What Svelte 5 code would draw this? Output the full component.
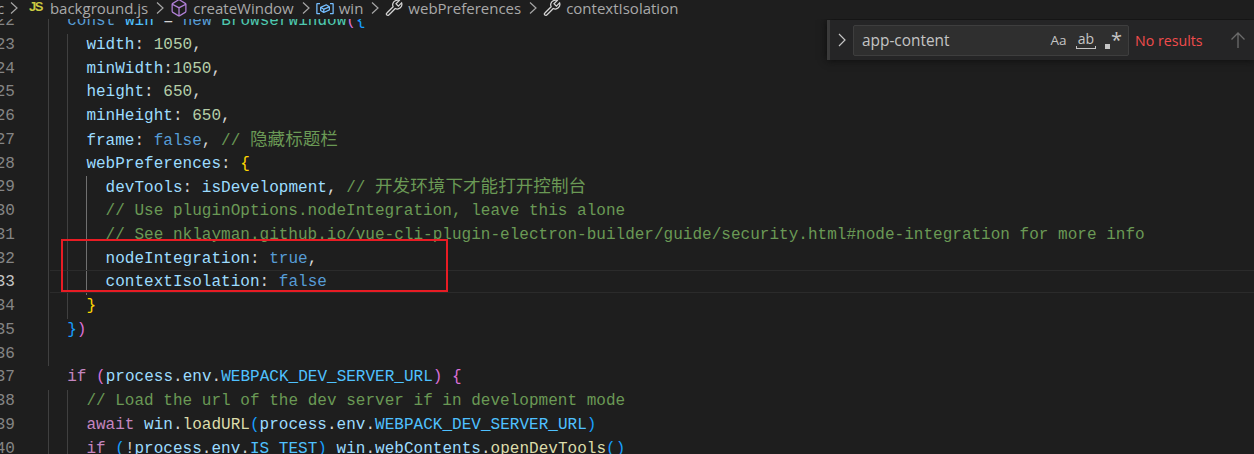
<script>
  const c = (t) => ['cm', t];
  const p = (t) => ['pr', t];
  const k = (t) => ['kw', t];
  const n = (t) => ['nu', t];
  const s = (t) => ['sy', t];
  const v = (t) => ['pr', t];
  const o = (t) => ['ct', t];
  const f = (t) => ['fn', t];
  const u = (t) => ['cn', t];
  const h = (t) => ['cjk', t];

  // guides: how many indent columns are drawn, the "active" one is brighter
  const lines = [
    { no: 22, g: 1, t: [k('const'), s(' '), u('win'), s(' = '), k('new'), s(' '), ['cl', 'BrowserWindow'], ['b2', '('], ['b3', '{']] },
    { no: 23, g: 2, t: [p('width'), s(': '), n('1050'), s(',')] },
    { no: 24, g: 2, t: [p('minWidth'), s(':'), n('1050'), s(',')] },
    { no: 25, g: 2, t: [p('height'), s(': '), n('650'), s(',')] },
    { no: 26, g: 2, t: [p('minHeight'), s(': '), n('650'), s(',')] },
    { no: 27, g: 2, t: [p('frame'), s(': '), k('false'), s(', '), c('// '), h('隐藏标题栏')] },
    { no: 28, g: 2, t: [p('webPreferences'), s(': '), ['b1', '{']] },
    { no: 29, g: 3, t: [p('devTools'), s(': '), v('isDevelopment'), s(', '), c('// '), h('开发环境下才能打开控制台')] },
    { no: 30, g: 3, t: [c('// Use pluginOptions.nodeIntegration, leave this alone')] },
    { no: 31, g: 3, t: [c('// See nklayman.github.io/vue-cli-plugin-electron-builder/guide/security.html#node-integration for more info')] },
    { no: 32, g: 3, t: [p('nodeIntegration'), s(': '), k('true'), s(',')] },
    { no: 33, g: 3, cur: true, t: [p('contextIsolation'), s(': '), k('false')] },
    { no: 34, g: 2, t: [['b1', '}']] },
    { no: 35, g: 1, t: [['b3', '}'], ['b2', ')']] },
    { no: 36, g: 1, t: [] },
    { no: 37, g: 1, skip: 1, t: [o('if'), s(' '), ['b2', '('], v('process'), s('.'), v('env'), s('.'), u('WEBPACK_DEV_SERVER_URL'), ['b2', ')'], s(' '), ['b2', '{']] },
    { no: 38, g: 2, t: [c('// Load the url of the dev server if in development mode')] },
    { no: 39, g: 2, t: [o('await'), s(' '), v('win'), s('.'), f('loadURL'), ['b3', '('], v('process'), s('.'), v('env'), s('.'), u('WEBPACK_DEV_SERVER_URL'), ['b3', ')']] },
    { no: 40, g: 2, t: [o('if'), s(' '), ['b3', '('], s('!'), v('process'), s('.'), v('env'), s('.'), u('IS_TEST'), ['b3', ')'], s(' '), v('win'), s('.'), v('webContents'), s('.'), f('openDevTools'), ['b3', '()']] }
  ];

  const crumbs = [
    { label: 'background.js', icon: 'js' },
    { label: 'createWindow', icon: 'method' },
    { label: 'win', icon: 'variable' },
    { label: 'webPreferences', icon: 'prop' },
    { label: 'contextIsolation', icon: 'prop' }
  ];
</script>

{#snippet chevron()}
  <svg class="chev" width="8" height="14" viewBox="0 0 8 14" fill="none" stroke="#a6a6a6" stroke-width="1.2">
    <path d="M1 1.5 7 7 1 12.5" />
  </svg>
{/snippet}

<div class="window">
  <nav class="crumbs">
    <span class="first">c</span>
    {#each crumbs as crumb}
      {@render chevron()}
      {#if crumb.icon === 'js'}
        <span class="js">JS</span>
      {:else if crumb.icon === 'method'}
        <svg width="20" height="20" viewBox="0 0 16 16" fill="#b180d7"><path d="M13.51 4l-5-3h-1l-5 3-.49.86v6l.49.85 5 3h1l5-3 .49-.85v-6L13.51 4zm-6 9.56l-4.5-2.7V5.7l4.5 2.45v5.41zM3.27 4.7l4.74-2.84 4.74 2.84-4.74 2.59L3.27 4.7zm9.74 6.16l-4.5 2.7V8.15l4.5-2.45v5.16z" /></svg>
      {:else if crumb.icon === 'variable'}
        <svg width="20" height="20" viewBox="0 0 16 16" fill="#75beff"><path d="M2 5h2V4H1.5l-.5.5v8l.5.5H4v-1H2V5zm12.5-1H12v1h2v7h-2v1h2.5l.5-.5v-8l-.5-.5zm-2.74 2.57L12 7v2.51l-.3.45-4.5 2-.46-.04-2.5-1.5-.24-.43v-2.5l.3-.46 4.5-2h.46l2.5 1.5zM5 9.71l1.5.9V9.28L5 8.38v1.33zm.58-2.15l1.45.87 3.39-1.5-1.45-.87-3.39 1.5zm1.95 3.17l3.5-1.56v-1.4l-3.5 1.55v1.41z" /></svg>
      {:else}
        <svg width="20" height="20" viewBox="0 0 16 16" fill="none" stroke="#d4d4d4" stroke-width="1"><path d="M1.9 12.5c1.3-1.4 3.7-3.8 5.4-5.5a3.6 3.6 0 0 1 1.9-4.9 3.7 3.7 0 0 1 3-.1l-2.6 2.6 1.9 1.9 2.6-2.6a3.7 3.7 0 0 1-5.1 4.5c-1.7 1.8-4 4.1-5.4 5.4a1.2 1.2 0 0 1-1.7-1.3z" /></svg>
      {/if}
      <span class="label">{crumb.label}</span>
    {/each}
  </nav>

  <div class="editor">
    <div class="scroll">
      {#each lines as line}
        <div class="line" class:cur={line.cur}>
          <span class="no">{line.no}</span>
          <span class="code">
            {#each Array(line.g) as _, i}
              <span class="guide" class:active={line.g === 3 && i === 2} class:none={line.skip === 1 && i === 0}></span>
            {/each}
            <span class="text">{#each line.t as tok}<span class={tok[0]}>{tok[1]}</span>{/each}</span>
          </span>
        </div>
      {/each}
    </div>

    <div class="mark"></div>

    <div class="find">
      <svg class="toggle" width="11" height="16" viewBox="0 0 11 16" fill="none" stroke="#c5c5c5" stroke-width="1.2"><path d="M2 2l6 6-6 6" /></svg>
      <div class="input">
        <span class="query">app-content</span>
        <span class="opts">
          <span class="aa">Aa</span>
          <span class="ab">ab</span>
          <span class="re"><i></i>*</span>
        </span>
      </div>
      <span class="none-found">No results</span>
      <svg class="prev" width="16" height="18" viewBox="0 0 16 18" fill="none" stroke="#6b6b6b" stroke-width="1.3"><path d="M8 17V2M1.5 8.5 8 2l6.5 6.5" /></svg>
    </div>
  </div>
</div>

<style>
  :global(body) {
    margin: 0;
    background: #1e1e1e;
  }

  .window {
    width: 1254px;
    height: 454px;
    overflow: hidden;
    background: #1e1e1e;
    display: flex;
    flex-direction: column;
  }

  .crumbs {
    flex: none;
    height: 15px;
    padding-bottom: 4px;
    display: flex;
    align-items: center;
    font-family: "Open Sans", sans-serif;
    font-size: 15px;
    color: #a9a9a9;
    white-space: nowrap;
    background: #1e1e1e;
    position: relative;
    z-index: 1;
  }

  .crumbs svg { flex: none; margin-right: 4px; }
  .crumbs .chev { margin: 0 5px 0 8px; }
  .first { margin-left: -3px; width: 5px; }
  .js {
    color: #cbcb41;
    font-weight: 700;
    font-size: 13px;
    letter-spacing: -1.5px;
    margin: -2px 8px 0 6px;
    font-family: "Liberation Sans", sans-serif;
  }

  .editor {
    flex: 1;
    position: relative;
    overflow: hidden;
  }

  .scroll {
    margin-top: -9px;
    font-family: "Liberation Mono", "Noto Sans CJK SC", monospace;
    font-size: 16px;
    letter-spacing: 0.02px;
    color: #d4d4d4;
  }

  .line {
    height: 23.75px;
    line-height: 23.75px;
    display: flex;
    white-space: pre;
    box-sizing: border-box;
  }

  /* current line highlight is a little shorter than the line itself */
  .line.cur .code::before {
    content: "";
    position: absolute;
    left: 2px;
    right: 0;
    top: -1px;
    height: 23px;
    box-sizing: border-box;
    border-top: 1px solid #2b2b2b;
    border-bottom: 1px solid #2b2b2b;
  }

  .no {
    flex: none;
    width: 48px;
    box-sizing: border-box;
    padding-right: 33px;
    text-align: right;
    direction: rtl;
    color: #858585;
    overflow: hidden;
  }

  .cur .no { color: #c6c6c6; }

  .code {
    flex: 1;
    display: flex;
    position: relative;
  }

  .guide {
    flex: none;
    width: 19.2px;
    box-shadow: inset 1px 0 0 #404040;
  }
  .guide.active { box-shadow: inset 1px 0 0 #707070; }
  .guide.none { box-shadow: none; }

  .cm { color: #6a9955; }
  .cjk {
    color: #6a9955;
    font-size: 17.6px;
    line-height: 1;
    letter-spacing: 0;
    font-family: "Noto Sans CJK SC", sans-serif;
  }
  .pr { color: #9cdcfe; }
  .kw { color: #569cd6; }
  .nu { color: #b5cea8; }
  .sy { color: #d4d4d4; }
  .ct { color: #c586c0; }
  .fn { color: #dcdcaa; }
  .cn { color: #4fc1ff; }
  .cl { color: #4ec9b0; }
  .b1 { color: #ffd700; }
  .b2 { color: #da70d6; }
  .b3 { color: #179fff; }

  /* red annotation drawn on top of the screenshot */
  .mark {
    position: absolute;
    left: 61px;
    top: 220px;
    width: 387px;
    height: 53px;
    box-sizing: border-box;
    border: 2px solid #e81c24;
  }

  .find {
    position: absolute;
    top: 1px;
    right: 0;
    width: 427px;
    height: 40px;
    box-sizing: border-box;
    display: flex;
    align-items: center;
    background: #252526;
    border-left: 3px solid #3a3a3a;
    box-shadow: 0 0 8px #0b0b0b;
    font-family: "Open Sans", sans-serif;
    font-size: 15px;
  }

  .toggle { margin-left: 7px; flex: none; }

  .input {
    margin-left: 5px;
    width: 276px;
    height: 31px;
    box-sizing: border-box;
    display: flex;
    align-items: center;
    justify-content: space-between;
    padding: 0 6px 0 8px;
    background: #2f2f2f;
    border: 1px solid #3e3e3e;
    border-radius: 2px;
    color: #c4c4c4;
  }

  .query { font-size: 15.4px; }

  .opts {
    display: flex;
    align-items: center;
    gap: 9px;
    font-size: 13.5px;
    color: #c5c5c5;
  }

  .ab {
    position: relative;
    padding: 0 2px;
    font-size: 14px;
    line-height: 14px;
    margin-top: -3px;
  }

  .ab::after {
    content: "";
    position: absolute;
    left: 0;
    right: 0;
    bottom: -3px;
    height: 3px;
    border: 1px solid #c5c5c5;
    border-top: 0;
    box-sizing: border-box;
  }

  .re {
    position: relative;
    padding-left: 6px;
    font-size: 20px;
    line-height: 20px;
  }

  .re i {
    position: absolute;
    left: 0;
    bottom: 1px;
    width: 5px;
    height: 5px;
    background: #c5c5c5;
  }

  .none-found {
    margin-left: 6px;
    color: #f14c4c;
    font-size: 14.2px;
  }

  .prev { margin-left: 27px; flex: none; }
</style>
